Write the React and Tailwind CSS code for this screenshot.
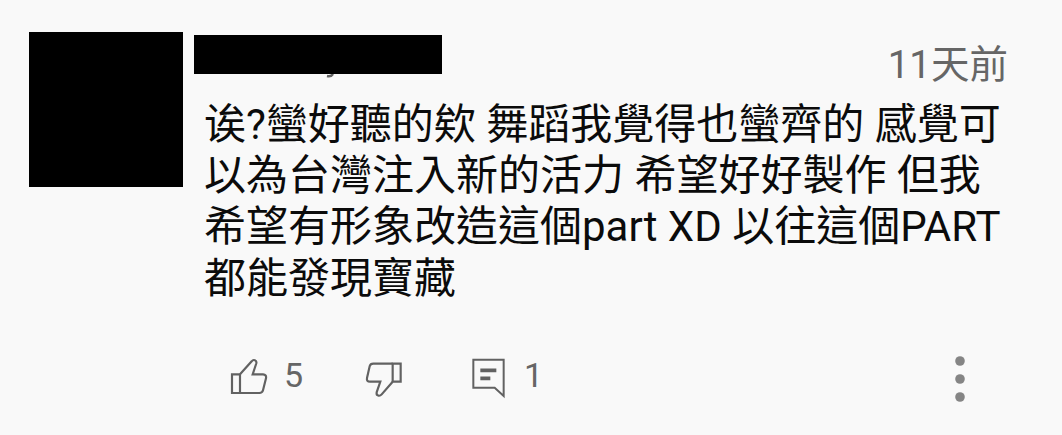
import React from 'react';

const lines = [
  '诶?蠻好聽的欸 舞蹈我覺得也蠻齊的 感覺可',
  '以為台灣注入新的活力 希望好好製作 但我',
  '希望有形象改造這個part XD 以往這個PART',
  '都能發現寶藏'
];

export default function App() {
  return (
    <div className="flex h-[435px] w-[1062px] bg-[#f9f9f9] pt-8 pl-[29px] font-[Roboto,'Noto_Sans_CJK_TC',sans-serif]">
      {/* Avatar */}
      <div className="h-[155px] w-[154px] shrink-0 bg-black" />

      <div className="ml-[11px] w-[868px] shrink-0">
        {/* Name and date */}
        <div className="flex h-[67px] items-start justify-between">
          <div className="mt-[3px]">
            <div className="h-[39px] w-[248px] bg-black" />
            <svg className="ml-[131px]" width="10" height="5" viewBox="0 0 10 5">
              <path d="M8 0Q6 3 2 2" fill="none" stroke="#626262" strokeWidth="2.5" />
            </svg>
          </div>
          <span className="mt-[9px] mr-[54px] text-[38.5px] leading-[48px] whitespace-nowrap text-[#666666]">11天前</span>
        </div>

        {/* Comment text */}
        <div className="pl-[10px] text-[42px] leading-[51.2px] text-[#0b0b0b]">
          {lines.map((line, i) => (
            <p key={i} className="whitespace-nowrap">{line}</p>
          ))}
        </div>

        {/* Actions */}
        <div className="mt-[47px] flex h-12 items-center text-[34px] leading-[48px] text-[#666666]">
          <svg className="mt-[4px] ml-[34px] shrink-0" width="44" height="48" viewBox="0 0 132 144" fill="none" stroke="#626262" strokeWidth="6.5">
            <path d="M12 64h24v56H12z" />
            <path d="M36 64L71 25C76 18 87 21 85 31L74 64H105Q116 65 114 76L105 112Q103 120 94 120H36" />
          </svg>
          <span className="ml-[12px] w-[26px]">5</span>
          <svg className="mt-[4px] ml-[53px] shrink-0" width="44" height="48" viewBox="0 0 132 144" fill="none" stroke="#626262" strokeWidth="6.5">
            <path d="M89 32h24v54H89z" />
            <path d="M89 32H31Q22 32 20 40L12 75Q10 86 21 86H52L41 118C39 129 50 131 56 124L89 86" />
          </svg>
          <svg className="mt-[4px] ml-[62px] shrink-0" width="42" height="48" viewBox="0 0 126 144" fill="none" stroke="#626262" strokeWidth="6">
            <path d="M13 20h91v109L77 104H13z" />
            <path d="M34 52h48M34 76h30" strokeWidth="11" />
          </svg>
          <span className="ml-[13px]">1</span>
          <svg className="mt-[8px] mr-[96px] ml-auto shrink-0" width="12" height="48" viewBox="0 0 12 48" fill="#858585">
            <circle cx="6" cy="6" r="4.8" />
            <circle cx="6" cy="24" r="4.8" />
            <circle cx="6" cy="42" r="4.8" />
          </svg>
        </div>
      </div>
    </div>
  );
}
